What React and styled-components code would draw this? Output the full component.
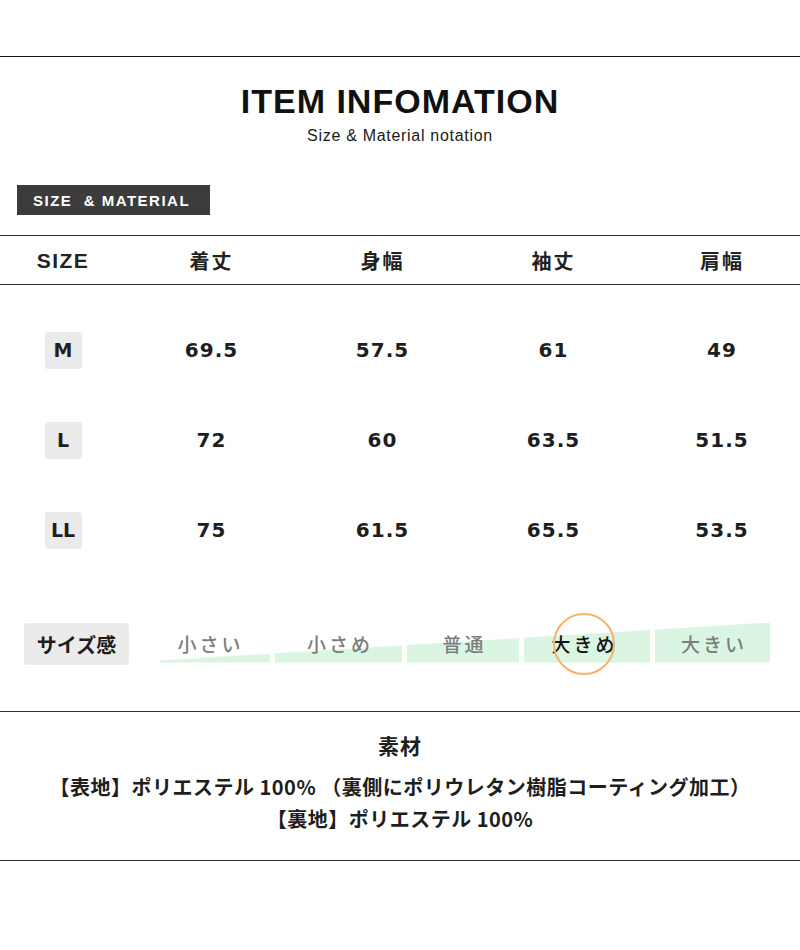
import React from "react";
import styled, { createGlobalStyle } from "styled-components";

const GlobalStyle = createGlobalStyle`
  body {
    margin: 0;
    background: #ffffff;
    font-family: "Liberation Sans", "Noto Sans CJK JP", sans-serif;
    color: #222222;
  }
`;

const columns = ["着丈", "身幅", "袖丈", "肩幅"];

const rows = [
  { size: "M", values: ["69.5", "57.5", "61", "49"] },
  { size: "L", values: ["72", "60", "63.5", "51.5"] },
  { size: "LL", values: ["75", "61.5", "65.5", "53.5"] },
];

// the green wedge runs from x=160 to x=770, rising from 2px to 40px
const feel = [
  { label: "小さい", width: 110, pull: 12 },
  { label: "小さめ", width: 127, pull: 0 },
  { label: "普通", width: 112, pull: 0 },
  { label: "大きめ", width: 126, pull: 8, picked: true },
  { label: "大きい", width: 115, pull: 0 },
];

const wedgeStart = 160;
const wedgeSlope = 38 / 610;
const bandHeight = 40;

const App = () => {
  let x = wedgeStart;
  const segments = feel.map((f) => {
    const left = 2 + (x - wedgeStart) * wedgeSlope;
    const right = 2 + (x + f.width - wedgeStart) * wedgeSlope;
    x += f.width + 5;
    return {
      ...f,
      leftTop: ((bandHeight - left) / bandHeight) * 100,
      rightTop: ((bandHeight - right) / bandHeight) * 100,
    };
  });

  return (
    <Page>
      <GlobalStyle />
      <TopRule />
      <Title>ITEM INFOMATION</Title>
      <Subtitle>Size &amp; Material notation</Subtitle>
      <SectionLabel>SIZE&nbsp; &amp; MATERIAL</SectionLabel>

      <TableRule />
      <HeaderRow>
        <HeadLatin>SIZE</HeadLatin>
        {columns.map((c) => (
          <HeadCell key={c}>{c}</HeadCell>
        ))}
      </HeaderRow>
      <TableRule />

      <Body>
        {rows.map((r) => (
          <DataRow key={r.size}>
            <SizeBadge>{r.size}</SizeBadge>
            {r.values.map((v, i) => (
              <Value key={i}>{v}</Value>
            ))}
          </DataRow>
        ))}
      </Body>

      <FeelRow>
        <FeelBadge>サイズ感</FeelBadge>
        <Scale>
          {segments.map((s) => (
            <Segment
              key={s.label}
              $w={s.width}
              $pull={s.pull}
              $lt={s.leftTop}
              $rt={s.rightTop}
            >
              <FeelText $picked={s.picked}>{s.label}</FeelText>
            </Segment>
          ))}
        </Scale>
      </FeelRow>

      <TableRule />
      <Material>
        <MaterialTitle>素材</MaterialTitle>
        <MaterialLine>
          【表地】ポリエステル 100% （裏側にポリウレタン樹脂コーティング加工）
        </MaterialLine>
        <MaterialLine>【裏地】ポリエステル 100%</MaterialLine>
      </Material>
      <TableRule />
    </Page>
  );
};

export default App;

const Page = styled.div`
  width: 800px;
  height: 950px;
  padding-top: 56px;
  box-sizing: border-box;
  overflow: hidden;
  background: #ffffff;
`;

const TopRule = styled.div`
  height: 1px;
  background: #111111;
`;

const Title = styled.h1`
  margin: 24px 0 0;
  font-family: "Liberation Sans", sans-serif;
  font-size: 34px;
  line-height: 40px;
  font-weight: bold;
  letter-spacing: 1px;
  text-align: center;
  color: #111111;
`;

const Subtitle = styled.div`
  margin-top: 5px;
  font-family: "Liberation Sans", sans-serif;
  font-size: 16px;
  line-height: 20px;
  letter-spacing: 0.7px;
  text-align: center;
  color: #1a1a1a;
`;

const SectionLabel = styled.div`
  margin: 39px 0 0 17px;
  width: 193px;
  height: 30px;
  box-sizing: border-box;
  padding-left: 16px;
  display: flex;
  align-items: center;
  background: #3c3c3c;
  color: #ffffff;
  font-family: "Liberation Sans", sans-serif;
  font-weight: bold;
  font-size: 15px;
  letter-spacing: 1.5px;
  white-space: nowrap;
`;

const TableRule = styled.div`
  height: 1px;
  background: #333333;

  ${SectionLabel} + & {
    margin-top: 20px;
  }
`;

const HeaderRow = styled.div`
  display: grid;
  grid-template-columns: 126px 171px 171px 171px 166px;
  height: 48px;
  align-items: center;
  justify-items: center;
`;

const HeadLatin = styled.div`
  font-family: "Liberation Sans", sans-serif;
  font-weight: bold;
  font-size: 21px;
  line-height: 26px;
  padding-top: 2px;
  letter-spacing: 1.5px;
  color: #222222;
`;

const HeadCell = styled.div`
  font-family: "Noto Sans CJK JP", sans-serif;
  font-weight: bold;
  font-size: 20px;
  letter-spacing: 2px;
  color: #222222;
`;

const Body = styled.div`
  padding-top: 20px;
`;

const DataRow = styled.div`
  display: grid;
  grid-template-columns: 126px 171px 171px 171px 166px;
  height: 90px;
  align-items: center;
  justify-items: center;
`;

const SizeBadge = styled.div`
  width: 37px;
  height: 37px;
  border-radius: 3px;
  background: #ebebeb;
  display: flex;
  align-items: center;
  justify-content: center;
  font-family: "DejaVu Sans", sans-serif;
  font-weight: bold;
  font-size: 19px;
  color: #1e1e1e;
`;

const Value = styled.div`
  font-family: "DejaVu Sans", sans-serif;
  font-weight: bold;
  font-size: 20px;
  letter-spacing: 1px;
  color: #1e1e1e;
`;

const FeelRow = styled.div`
  display: flex;
  align-items: center;
  padding: 48px 0 46px 24px;
`;

const FeelBadge = styled.div`
  width: 105px;
  height: 42px;
  border-radius: 3px;
  background: #ebebeb;
  display: flex;
  align-items: center;
  justify-content: center;
  font-family: "Noto Sans CJK JP", sans-serif;
  font-weight: bold;
  font-size: 20px;
  color: #1e1e1e;
`;

const Scale = styled.div`
  display: flex;
  gap: 5px;
  margin-left: 31px;
  margin-top: -3px;
`;

const Segment = styled.div`
  position: relative;
  width: ${(p) => p.$w}px;
  height: 40px;
  display: flex;
  align-items: center;
  justify-content: center;
  padding-top: 2px;
  padding-right: ${(p) => p.$pull}px;
  box-sizing: border-box;

  &::before {
    content: "";
    position: absolute;
    inset: 0;
    background: #daf5e2;
    clip-path: polygon(
      0 ${(p) => p.$lt}%,
      100% ${(p) => p.$rt}%,
      100% 100%,
      0 100%
    );
  }
`;

const FeelText = styled.span`
  position: relative;
  font-family: "Noto Sans CJK JP", sans-serif;
  font-weight: 500;
  font-size: 19px;
  letter-spacing: 3px;
  margin-right: -3px;
  color: ${(p) => (p.$picked ? "#161616" : "#7d7d7d")};

  &::after {
    content: ${(p) => (p.$picked ? '""' : "none")};
    position: absolute;
    left: 50%;
    top: 50%;
    width: 58px;
    height: 58px;
    transform: translate(-50%, -50%);
    border: 2px solid #f8b16c;
    border-radius: 50%;
  }
`;

const Material = styled.div`
  padding: 18px 0 25px;
  text-align: center;
  font-family: "Noto Sans CJK JP", sans-serif;
  color: #1e1e1e;
`;

const MaterialTitle = styled.div`
  font-weight: bold;
  font-size: 21px;
  line-height: 30px;
  letter-spacing: 1px;
  margin-bottom: 11px;
`;

const MaterialLine = styled.div`
  font-weight: bold;
  font-size: 20px;
  line-height: 32px;
  letter-spacing: 0.5px;
  white-space: nowrap;
`;
